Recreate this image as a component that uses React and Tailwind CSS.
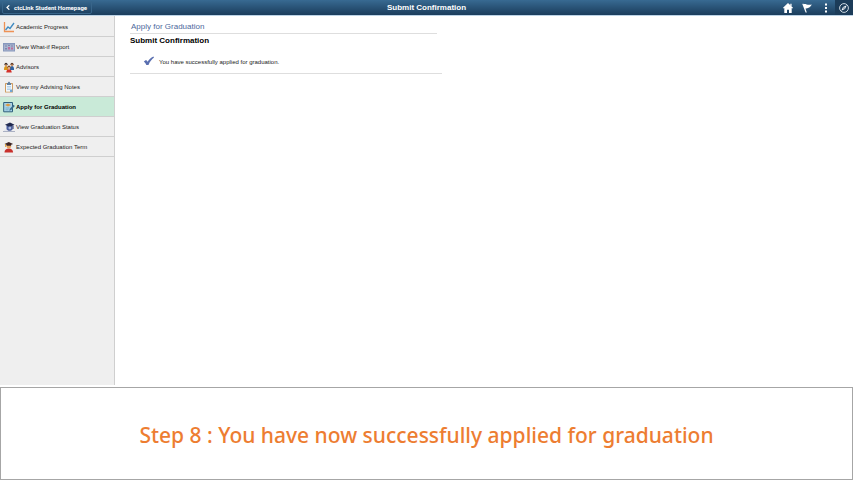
import React from 'react';

function ProgressIcon() {
    return (
        <svg className="h-3 w-3" viewBox="0 0 12 12" fill="none" aria-hidden="true">
            <path d="M1.5 1v9.5H11" stroke="#ee9155" strokeWidth="1.3" />
            <path d="M2.5 9l2.5-3 2 1.5L11 2" stroke="#3f8ac0" strokeWidth="1.3" />
        </svg>
    );
}

function ReportIcon() {
    return (
        <svg className="h-3 w-3" viewBox="0 0 12 12" aria-hidden="true">
            <rect x="0" y="2" width="12" height="8.5" fill="#8798bd" />
            <rect x="1" y="3.5" width="10" height="6" fill="#a9b3ce" />
            <path d="M2 4.5h2v1H2zM5 4h2v1H5zM8 4.5h2v1H8zM2 7h2v1.5H2z" fill="#7d86ad" />
            <path d="M5 6h2v2.5H5zM8 6.5h2v2H8z" fill="#bd6f9c" />
        </svg>
    );
}

function AdvisorsIcon() {
    return (
        <svg className="h-3 w-3" viewBox="0 0 12 12" aria-hidden="true">
            <path d="M1 8c0-4 4-4 4 0v1H1z" fill="#d9961e" />
            <path d="M7 8c0-4 4-4 4 0v1H7z" fill="#2f62a0" />
            <circle cx="3" cy="3.2" r="1.5" fill="#3a2c28" />
            <circle cx="9" cy="3.2" r="1.5" fill="#5d3723" />
            <circle cx="3" cy="4.2" r="1" fill="#d79a6b" />
            <circle cx="9" cy="4.2" r="1" fill="#d79a6b" />
            <circle cx="6" cy="6.2" r="1.6" fill="#7b4426" />
            <circle cx="6" cy="7" r="1.1" fill="#edbb8a" />
            <path d="M3.3 11.5c0-4.2 5.4-4.2 5.4 0z" fill="#d3302a" />
        </svg>
    );
}

function NotesIcon() {
    return (
        <svg className="h-3 w-3" viewBox="0 0 12 12" aria-hidden="true">
            <rect x="2" y="2" width="8" height="9.5" rx="0.6" fill="#cf9d62" />
            <rect x="3" y="3.2" width="6" height="7.5" fill="#f1f7fc" />
            <path d="M4 4V2h1c0-1.6 2-1.6 2 0h1v2z" fill="#5f7f9f" />
            <path d="M4 5.5h4M4 7h4M4 8.5h3" stroke="#a5c8e4" strokeWidth="0.8" />
            <path d="M7 11V8.5h2.5V11z" fill="#6fa5d4" />
        </svg>
    );
}

function ApplyIcon() {
    return (
        <svg className="h-3 w-3" viewBox="0 0 12 12" aria-hidden="true">
            <path d="M.7 1.5h8.8v9.3H.7z" fill="#a9d3e8" stroke="#2f5f7d" />
            <path d="M2 4l3-1.5L8 4 5 5.5z" fill="#d99a45" />
            <path d="M2.5 7h4M2.5 8.8h3" stroke="#6ba4c2" strokeWidth="0.8" />
            <path d="M6.3 9.7l.6-2 3.6-4 1.3 1.2-3.6 4z" fill="#3c6f8d" />
        </svg>
    );
}

function StatusIcon() {
    return (
        <svg className="h-3 w-3" viewBox="0 0 12 12" aria-hidden="true">
            <path d="M3.5 4.5h6v4c-1 1.8-5 1.8-6 0z" fill="#4b5f9f" />
            <path d="M2 3.8L7 1.5l4.5 2.2L6.5 6z" fill="#20294f" />
            <circle cx="6.8" cy="7" r="1.4" fill="#aab7dc" />
            <path d="M9.5 4.5h1V8h-1z" fill="#2b3768" />
            <path d="M0 10.5h12" stroke="#a3a9bd" strokeWidth="0.9" />
            <path d="M1 9.3c1.5-1.5 3-.8 4 .4H1z" fill="#dfe3ee" />
        </svg>
    );
}

function TermIcon() {
    return (
        <svg className="h-3 w-3" viewBox="0 0 12 12" aria-hidden="true">
            <path d="M1.5 11.5c-.2-5.3 8.8-5.3 8.6 0z" fill="#c9302c" />
            <circle cx="5.8" cy="5.3" r="2.3" fill="#e5a660" />
            <path d="M1.5 3l4.3-2 4.3 2-2 .8v1H3.5v-1z" fill="#3b2424" />
            <path d="M2 3h.8v3H2z" fill="#d99a28" />
        </svg>
    );
}

const menu = [
    { label: 'Academic Progress', Icon: ProgressIcon },
    { label: 'View What-if Report', Icon: ReportIcon },
    { label: 'Advisors', Icon: AdvisorsIcon },
    { label: 'View my Advising Notes', Icon: NotesIcon },
    { label: 'Apply for Graduation', Icon: ApplyIcon, active: true },
    { label: 'View Graduation Status', Icon: StatusIcon },
    { label: 'Expected Graduation Term', Icon: TermIcon },
];

function Header() {
    return (
        <header className="grid h-4 grid-cols-[1fr_auto_1fr] items-center border-b border-[#bcd3e6] bg-linear-to-b from-[#386a92] to-[#1b3d5c] text-white">
            <button type="button" className="ml-[2px] flex h-[13px] w-[90px] items-center gap-1 rounded-xs border border-[#38658a] pl-[3px] font-[Roboto,sans-serif] text-[6px] leading-none font-bold whitespace-nowrap">
                <svg className="h-[5px] w-1" viewBox="0 0 4 5" fill="none" stroke="currentColor" strokeWidth="1.2" aria-hidden="true">
                    <path d="M3.3 .3L1 2.5l2.3 2.2" />
                </svg>
                ctcLink Student Homepage
            </button>
            <h1 className="text-[8px] leading-none font-bold">Submit Confirmation</h1>
            <div className="flex h-full items-center justify-end">
                <button type="button" aria-label="Home" className="flex h-full w-[19px] items-center justify-center">
                    <svg className="h-[10px] w-[10px]" viewBox="0 0 10 10" fill="currentColor" aria-hidden="true">
                        <path d="M5 0l5 4.8-.7.7L8.7 5v5H6V6.7H4V10H1.3V5l-.6.5L0 4.8zM7.3.8h1.3v2.5L7.3 2z" />
                    </svg>
                </button>
                <button type="button" aria-label="Notifications" className="flex h-full w-[19px] items-center justify-center">
                    <svg className="h-[10px] w-[10px]" viewBox="0 0 10 10" fill="currentColor" aria-hidden="true">
                        <path d="M.3 1l.9-.4.4.7C3.5.2 5 2.6 9.8 1.5 8.7 3.6 6.5 5.8 3.5 5.4L4.8 9.4H3.6z" />
                    </svg>
                </button>
                <button type="button" aria-label="Actions" className="flex h-full w-[19px] items-center justify-center">
                    <svg className="h-[10px] w-[10px]" viewBox="0 0 10 10" fill="currentColor" aria-hidden="true">
                        <path d="M4 .5h2v2H4zM4 4h2v2H4zM4 7.5h2v2H4z" />
                    </svg>
                </button>
                <button type="button" aria-label="Navigator" className="flex h-full w-[18px] items-center justify-center bg-[#1c3c59]">
                    <svg className="h-[10px] w-[10px]" viewBox="0 0 10 10" aria-hidden="true">
                        <circle cx="5" cy="5" r="4.4" fill="none" stroke="#dfe8ef" strokeWidth="0.9" />
                        <path d="M7.8 2.2L6 6 2.2 7.8 4 4z" fill="#f4f8fb" />
                        <circle cx="5" cy="5" r="0.7" fill="#1c3c59" />
                    </svg>
                </button>
            </div>
        </header>
    );
}

function Sidebar() {
    return (
        <nav className="w-[115px] shrink-0 border-r border-[#cfcfcf] bg-[#efefef] pt-px">
            <ul>
                {menu.map(({ label, Icon, active }) => (
                    <li key={label}>
                        <a
                            href="#"
                            aria-current={active ? 'page' : undefined}
                            className={`flex h-5 items-center gap-px border-b border-[#cfcfcf] pl-[3px] text-[6px] leading-none whitespace-nowrap ${active ? 'bg-[#c9ead8] font-bold text-black' : 'text-[#222222]'
                                }`}
                        >
                            <Icon />
                            {label}
                        </a>
                    </li>
                ))}
            </ul>
        </nav>
    );
}

export default function App() {
    return (
        <div className="flex min-h-screen flex-col bg-white font-['Liberation_Sans',Arial,sans-serif]">
            <Header />
            <div className="flex flex-1">
                <Sidebar />
                <main className="flex-1 px-[15px] pt-[5px]">
                    <h2 className="w-[307px] border-b border-[#dedede] pl-px text-[8px] leading-3 text-[#4c689c]">Apply for Graduation</h2>
                    <section className="w-[312px] border-b border-[#dedede] pb-[3px]">
                        <h3 className="text-[8px] leading-[14px] font-bold text-black">Submit Confirmation</h3>
                        <p className="flex items-center gap-1 pt-[6px] pl-[13px] text-[6px] leading-4 text-[#222222]">
                            <svg className="h-3 w-3" viewBox="0 0 12 12" fill="#5a6fb0" aria-hidden="true">
                                <path d="M.8 5.5l2.2-1.4c.8.5 1.2 1 1.5 1.7C6 3.4 7.8 1.6 10.4.4l.6 1.1C8.6 3.4 6.9 5.6 5.5 8.9H3.3C2.6 7.4 1.9 6.4.8 5.5z" />
                            </svg>
                            You have successfully applied for graduation.
                        </p>
                    </section>
                </main>
            </div>
            <footer className="mt-[2px] flex h-[93px] items-center justify-center border border-[#a6a6a6] pt-[2px]">
                <p className="font-['Noto_Sans','Open_Sans',sans-serif] text-[21px] leading-8 font-medium text-[#ed7d31]">
                    Step 8 : You have now successfully applied for graduation
                </p>
            </footer>
        </div>
    );
}
